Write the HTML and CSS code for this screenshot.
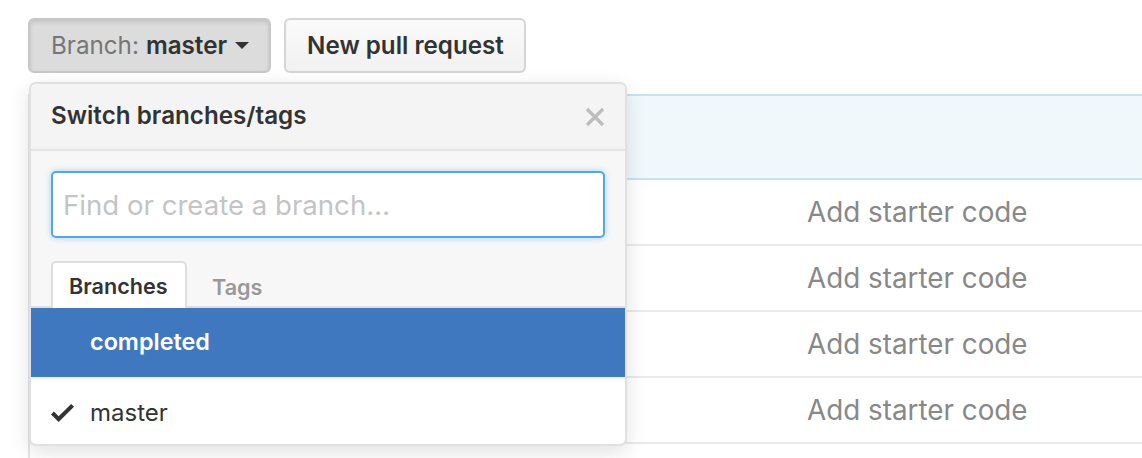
FILE: index.html
```html
<!DOCTYPE html>
<html>
<head>
<meta charset="utf-8">
<link rel="stylesheet" href="styles.css">
</head>
<body>
<div class="page">
  <div class="toolbar">
    <button class="btn btn-selected"><span class="muted">Branch:</span> <span class="strong">master</span><span class="caret"></span></button>
    <button class="btn">New pull request</button>
  </div>
  <div class="table">
    <div class="row row-info"></div>
    <div class="row"><span class="cell-spacer"></span><span class="msg">Add starter code</span></div>
    <div class="row"><span class="cell-spacer"></span><span class="msg">Add starter code</span></div>
    <div class="row"><span class="cell-spacer"></span><span class="msg">Add starter code</span></div>
    <div class="row"><span class="cell-spacer"></span><span class="msg">Add starter code</span></div>
    <div class="row row-more"></div>
  </div>

  <div class="menu">
    <div class="menu-header">
      <span class="menu-title">Switch branches/tags</span>
      <svg class="close" width="20" height="20" viewBox="0 0 20 20"><path d="M2 2L18 18M18 2L2 18" stroke="#bdbdbd" stroke-width="3.2" stroke-linecap="butt"/></svg>
    </div>
    <div class="menu-filters">
      <div class="filter-input">Find or create a branch…</div>
      <div class="tabs">
        <span class="tab tab-active">Branches</span>
        <span class="tab">Tags</span>
      </div>
    </div>
    <div class="item item-focus"><span class="item-icon"></span>completed</div>
    <div class="item"><span class="item-icon"><svg width="23" height="31" viewBox="0 0 12 16"><path d="M12 5l-8 8-4-4 1.5-1.5L4 10l6.5-6.5L12 5z" fill="#333"/></svg></span>master</div>
  </div>
</div>
</body>
</html>
```

FILE: styles.css
```css
* { box-sizing: border-box; }
html, body { margin: 0; padding: 0; background: #fff; }
body { font-family: "Inter", "Liberation Sans", sans-serif; color: #333; overflow: hidden; }

.page { position: relative; padding: 18px 0 0 28px; height: 458px; overflow: hidden; }

.toolbar { display: flex; gap: 13px; height: 55px; }
.btn {
  font-family: inherit;
  height: 55px;
  padding: 0 20px 0 21px;
  border: 2px solid #d5d5d5;
  border-radius: 6px;
  background: linear-gradient(#fafafa, #f1f1f1);
  font-size: 24.2px;
  font-weight: 600;
  color: #333;
  display: flex;
  align-items: center;
  gap: 7px;
}
.btn-selected {
  background: #dcdcdc;
  border-color: #c7c7c7;
  box-shadow: inset 0 2px 4px rgba(0,0,0,.12);
  padding: 0 20px 0 21px;
}
.muted { color: #767676; font-weight: 400; }
.strong { color: #333; font-weight: 600; }
.caret {
  width: 0; height: 0;
  border-left: 7px solid transparent;
  border-right: 7px solid transparent;
  border-top: 7px solid #333;
  margin-left: 1px;
}

.table {
  margin-top: 21px;
  border-left: 2px solid #e5e5e5;
  width: 1114px;
}
.row {
  height: 66px;
  border-bottom: 2px solid #eaeaea;
  display: grid;
  grid-template-columns: 777px 1fr;
  align-items: center;
}
.row-info {
  height: 86px;
  background: #f1f8fc;
  border-top: 2px solid #c9e2f2;
  border-bottom: 2px solid #c9e2f2;
}
.row-more { border-bottom: none; }
.msg { font-size: 27.8px; color: #888; }

.menu {
  position: absolute;
  left: 29px;
  top: 82px;
  width: 598px;
  height: 364px;
  background: #fff;
  border: 2px solid #e0e0e0;
  border-radius: 7px;
  box-shadow: 0 6px 20px rgba(0,0,0,.12);
  overflow: hidden;
  display: flex;
  flex-direction: column;
}
.menu-header {
  height: 67px;
  flex: none;
  background: #f4f4f4;
  border-bottom: 2px solid #e3e3e3;
  display: flex;
  align-items: center;
  justify-content: space-between;
  padding: 0 20px 2px 20px;
}
.menu-title { font-size: 24.2px; font-weight: 600; color: #333; }
.close { margin-top: 2px; }

.menu-filters {
  background: #f7f7f7;
  padding: 20px 20px 0 20px;
  border-bottom: 2px solid #dedede;
  flex: none;
}
.filter-input {
  height: 67px;
  background: #fff;
  border: 2px solid #51a7e8;
  border-radius: 5px;
  box-shadow: 0 0 6px rgba(81,167,232,.45);
  font-size: 27.6px;
  color: #c4c4c4;
  display: flex;
  align-items: center;
  padding: 0 10px;
}
.tabs {
  display: flex;
  margin-top: 23px;
  height: 45px;
  align-items: flex-end;
}
.tab {
  height: 45px;
  margin-bottom: -2px;
  padding: 0 24px 0 23px;
  display: flex;
  align-items: center;
  font-size: 21.6px;
  font-weight: 600;
  color: #999;
  border: 2px solid transparent;
  border-bottom: none;
  border-radius: 5px 5px 0 0;
}
.tab-active {
  background: #fff;
  color: #333;
  border-color: #dedede;
  width: 136px;
  padding: 0 0 0 16px;
  height: 47px;
}

.item {
  height: 69px;
  display: flex;
  align-items: center;
  font-size: 24px;
  color: #333;
  padding-left: 20px;
  flex: none;
}
.item + .item { border-top: 2px solid #eee; height: 68px; }
.item-icon { width: 39px; display: flex; align-items: center; }
.item-focus { background: #4078c0; color: #fff; font-weight: 600; font-size: 23.4px; padding-bottom: 2px; }
```
